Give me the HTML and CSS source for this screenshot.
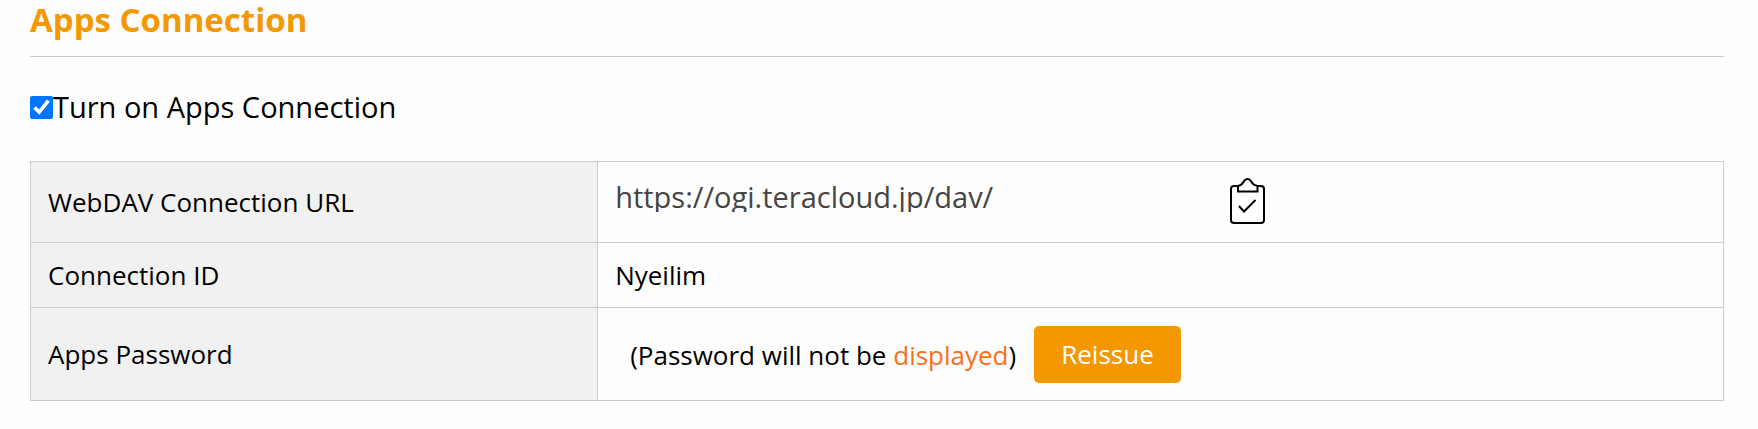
FILE: index.html
```html
<!DOCTYPE html>
<html lang="en">
<head>
<meta charset="utf-8">
<title>Apps Connection</title>
<link rel="stylesheet" href="styles.css">
</head>
<body>
<main class="section">
  <h2 class="section-title">Apps Connection</h2>
  <div class="toggle">
    <input class="toggle-box" type="checkbox" id="apps-on" checked>
    <label class="toggle-label" for="apps-on">Turn on Apps Connection</label>
  </div>
  <table class="settings">
    <tr>
      <th class="name" scope="row"><label for="dav-url">WebDAV Connection URL</label></th>
      <td class="value">
        <div class="url-line">
          <input class="url" id="dav-url" type="text" readonly value="https://ogi.teracloud.jp/dav/">
          <button class="copy" type="button" aria-label="Copy URL">
            <svg class="copy-icon" viewBox="0 0 36 48" fill="none" stroke="#000" stroke-width="2">
              <path d="M8 8H4Q1 8 1 11V42Q1 45 4 45H31Q34 45 34 42V11Q34 8 31 8H27"/>
              <path d="M8 13.500V8Q12 7 13.500 4Q15 1 17.500 1T21.500 4Q23 7 27.500 8V13.500Z"/>
              <path d="M9 28L14 33.500L25.500 22"/>
            </svg>
          </button>
        </div>
      </td>
    </tr>
    <tr>
      <th class="name" scope="row">Connection ID</th>
      <td class="value">Nyeilim</td>
    </tr>
    <tr>
      <th class="name" scope="row">Apps Password</th>
      <td class="value">
        <div class="password-line">
          <span>(Password will not be <span class="accent">displayed</span>)</span>
          <button class="reissue" type="button">Reissue</button>
        </div>
      </td>
    </tr>
  </table>
</main>
</body>
</html>
```
FILE: styles.css
```css
* {
  box-sizing: border-box;
}

body {
  margin: 0;
  background: #fefefe;
  color: #000;
  font-family: "Segoe UI", "Open Sans", "Noto Sans", sans-serif;
  font-size: 26px;
  line-height: 32px;
}

.section {
  padding: 0 34px 0 30px;
}

.section-title {
  margin: 0 0 32px;
  padding-bottom: 17px;
  border-bottom: 1px solid #ccc;
  color: #f39800;
  font-size: 33px;
  font-weight: 700;
  line-height: 39px;
}

.toggle {
  display: flex;
  align-items: center;
  margin-bottom: 36px;
  font-size: 29px;
  line-height: 36px;
}

.toggle-box {
  width: 23px;
  height: 23px;
  margin: 0;
  accent-color: #0075ff;
}

.settings {
  width: 100%;
  border-collapse: collapse;
  table-layout: fixed;
}

.name,
.value {
  padding: 16px 17px;
  border: 1px solid #ccc;
  text-align: left;
  font-weight: 400;
  vertical-align: middle;
}

.name {
  width: 33.5%;
  background: #f1f1f1;
}

.url-line {
  display: flex;
  align-items: flex-start;
  gap: 20px;
}

.url {
  width: 595px;
  height: 34px;
  padding: 2px 0 0;
  border: 0;
  outline: 0;
  background: none;
  color: #444;
  font: inherit;
  font-size: 29px;
}

.copy {
  display: flex;
  padding: 0;
  border: 0;
  background: none;
}

.copy-icon {
  width: 36px;
  height: 48px;
  overflow: visible;
}

.password-line {
  display: flex;
  align-items: center;
  gap: 18px;
  padding: 2px 0 1px 15px;
}

.accent {
  color: #ff6d1b;
}

.reissue {
  padding: 12px 27px;
  border: 0;
  border-radius: 5px;
  background: #f39800;
  color: #fff;
  font: inherit;
  line-height: 33px;
}
```
